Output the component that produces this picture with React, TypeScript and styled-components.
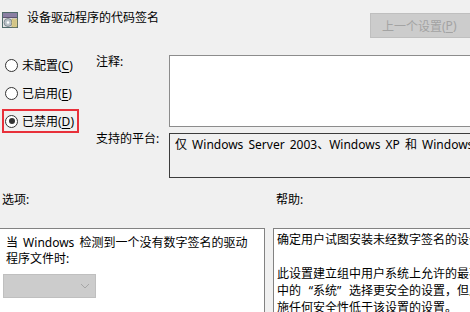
import React from "react";
import styled, { createGlobalStyle } from "styled-components";

const Global = createGlobalStyle`
  html, body { margin: 0; padding: 0; background: #f0f0f0; }
  body {
    font-family: "Noto Sans", "Noto Sans CJK SC", sans-serif;
    font-size: 12px;
    word-spacing: 2px;
    color: #000;
  }
`;

const Window = styled.div`
  width: 470px;
  height: 312px;
  overflow: hidden;
  background: #f0f0f0;
`;

const Frame = styled.div`
  width: 510px;
`;

const Header = styled.div`
  display: flex;
  align-items: flex-start;
  height: 40px;
`;

const IconWrap = styled.div`
  margin: 12px 0 0 2px;
  width: 16px;
  height: 16px;
  flex: none;
`;

const Title = styled.div`
  margin: 11px 0 0 9px;
  line-height: 14px;
  flex: 1;
  white-space: nowrap;
`;

const NavButton = styled.div`
  margin-top: 13px;
  width: 127px;
  height: 23px;
  background: #cccccc;
  border: 1px solid #bfbfbf;
  color: #a3a3a3;
  display: flex;
  align-items: center;
  padding-left: 11px;
  box-sizing: content-box;
  white-space: nowrap;
`;

const Top = styled.div`
  display: grid;
  grid-template-columns: 96px 73px 1fr;
  grid-template-rows: 72px 45px;
  row-gap: 6px;
  padding-top: 15px;
`;

const RadioGroup = styled.div`
  grid-column: 1;
  grid-row: 1 / span 2;
  margin-top: -2px;
  display: flex;
  flex-direction: column;
  gap: 4px;
`;

const RadioRow = styled.div<{ $flag?: boolean }>`
  margin-left: 2px;
  width: 72px;
  height: 20px;
  border: 2px solid ${(p) => (p.$flag ? "#e8303a" : "transparent")};
  padding-left: 1px;
  display: flex;
  align-items: center;
  gap: 4px;
  white-space: nowrap;
`;

const RadioCircle = styled.span<{ $on?: boolean }>`
  width: 11px;
  height: 11px;
  border: 1px solid #333;
  border-radius: 50%;
  background: #fff;
  display: flex;
  align-items: center;
  justify-content: center;
  flex: none;
  &::after {
    content: "";
    display: ${(p) => (p.$on ? "block" : "none")};
    width: 6px;
    height: 6px;
    border-radius: 50%;
    background: #333;
  }
`;

const Key = styled.span`
  text-decoration: underline;
  text-underline-offset: 2px;
`;

const FieldLabel = styled.div<{ $shift?: number }>`
  line-height: 14px;
  white-space: nowrap;
  margin-top: ${(p) => p.$shift ?? 0}px;
`;

const CommentBox = styled.div`
  background: #fff;
  border: 1px solid #8c8c8c;
`;

const PlatformBox = styled.div`
  border: 1px solid #3c3c3c;
  padding: 3px 5px;
  line-height: 16px;
  white-space: nowrap;
  overflow: hidden;
`;

const SectionHeads = styled.div`
  display: grid;
  grid-template-columns: 274px 1fr;
  margin-top: 15px;
  line-height: 14px;
`;

const HeadText = styled.div<{ $indent: number }>`
  padding-left: ${(p) => p.$indent}px;
`;

const Panels = styled.div`
  display: grid;
  grid-template-columns: 266px 1fr;
  column-gap: 8px;
  margin-top: 21px;
  margin-left: -1px;
  height: 100px;
`;

const OptionsPanel = styled.div`
  background: #fff;
  border: 1px solid #828282;
  padding: 6px 5px 0 6px;
  line-height: 16px;
  white-space: nowrap;
  overflow: hidden;
`;

const Combo = styled.div`
  margin: 7px 0 0 -3px;
  height: 22px;
  background: #cccccc;
  border: 1px solid #bfbfbf;
  display: flex;
  align-items: center;
  justify-content: flex-end;
  padding-right: 5px;
  box-sizing: content-box;
  width: 86px;
`;

const HelpPanel = styled.div`
  background: #fff;
  border: 1px solid #828282;
  padding: 2px 3px 0 3px;
  line-height: 17px;
  white-space: nowrap;
  overflow: hidden;
`;

const Quote = styled.span<{ $open?: boolean }>`
  display: inline-block;
  width: 12px;
  text-align: ${(p) => (p.$open ? "right" : "left")};
`;

const PolicyIcon = () => (
  <svg width="16" height="16" viewBox="0 0 16 16">
    <rect x="0.5" y="0.5" width="15" height="15" fill="#e6e6e6" stroke="#4f6a6a" />
    <rect x="1" y="1" width="14" height="4" fill="#8a7fa3" />
    <rect x="1" y="5" width="14" height="1" fill="#5e5470" />
    <circle cx="6" cy="10.5" r="4" fill="#b9c2c8" stroke="#6e7a82" strokeWidth="0.8" />
    <circle cx="6" cy="10.5" r="1.2" fill="#fff" />
    <rect x="10" y="7" width="5" height="8" fill="#f3e6a6" stroke="#a09050" strokeWidth="0.6" />
    <line x1="11" y1="9" x2="14" y2="9" stroke="#8a7a40" strokeWidth="0.6" />
    <line x1="11" y1="11" x2="14" y2="11" stroke="#8a7a40" strokeWidth="0.6" />
    <line x1="11" y1="13" x2="14" y2="13" stroke="#8a7a40" strokeWidth="0.6" />
  </svg>
);

const Chevron = () => (
  <svg width="10" height="6" viewBox="0 0 10 6">
    <polyline points="1,1 5,5 9,1" fill="none" stroke="#a6a6a6" strokeWidth="1" />
  </svg>
);

export default function App() {
  return (
    <Window>
      <Global />
      <Frame>
        <Header>
          <IconWrap>
            <PolicyIcon />
          </IconWrap>
          <Title>设备驱动程序的代码签名</Title>
          <NavButton>
            上一个设置(<Key>P</Key>)
          </NavButton>
        </Header>
        <Top>
          <RadioGroup>
            <RadioRow>
              <RadioCircle />
              <span>
                未配置(<Key>C</Key>)
              </span>
            </RadioRow>
            <RadioRow>
              <RadioCircle />
              <span>
                已启用(<Key>E</Key>)
              </span>
            </RadioRow>
            <RadioRow $flag>
              <RadioCircle $on />
              <span>
                已禁用(<Key>D</Key>)
              </span>
            </RadioRow>
          </RadioGroup>
          <FieldLabel>注释:</FieldLabel>
          <CommentBox />
          <FieldLabel $shift={-1}>支持的平台:</FieldLabel>
          <PlatformBox>仅 Windows Server 2003、Windows XP 和 Windows 2000</PlatformBox>
        </Top>
        <SectionHeads>
          <HeadText $indent={2}>选项:</HeadText>
          <HeadText $indent={2}>帮助:</HeadText>
        </SectionHeads>
        <Panels>
          <OptionsPanel>
            当 Windows 检测到一个没有数字签名的驱动
            <br />
            程序文件时:
            <Combo>
              <Chevron />
            </Combo>
          </OptionsPanel>
          <HelpPanel>
            确定用户试图安装未经数字签名的设备驱动程序文件时系统的响应。
            <br />
            <br />
            此设置建立组中用户系统上允许的最不安全的响应。用户可以使用控制面板
            <br />
            中的<Quote $open>“</Quote>系统<Quote>”</Quote>选择更安全的设置，但启用此设置后，系统不会实
            <br />
            施任何安全性低于该设置的设置。
          </HelpPanel>
        </Panels>
      </Frame>
    </Window>
  );
}
